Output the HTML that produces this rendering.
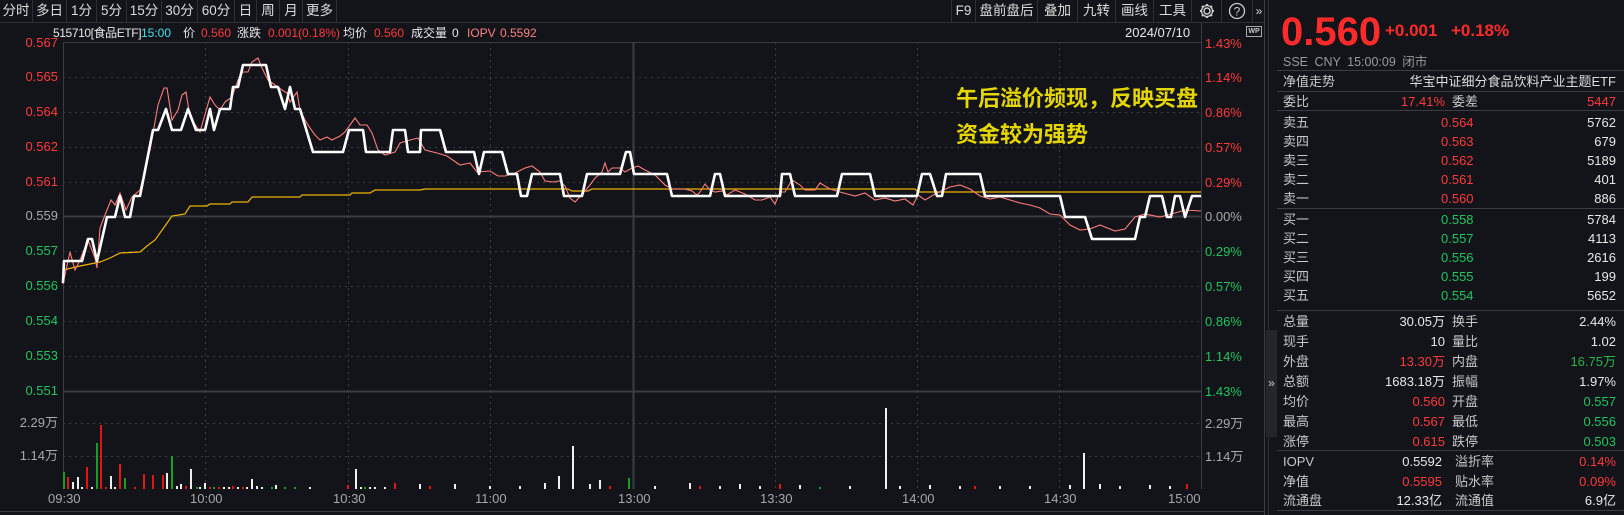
<!DOCTYPE html>
<html><head><meta charset="utf-8"><style>
*{margin:0;padding:0;box-sizing:border-box}
body{width:1624px;height:515px;background:#12141a;overflow:hidden;position:relative;font-family:"Liberation Sans","Noto Sans CJK SC",sans-serif;font-size:13px;color:#d8d8d8}
.a{position:absolute;white-space:nowrap;line-height:1}
.tb{position:absolute;top:0;height:22px;border-right:1px solid #2c2f35;color:#dcdcdc;font-size:13.5px;line-height:22px;text-align:center}
.r{color:#ff3a3a}.g{color:#22c55e}.w{color:#e8e8e8}.gr{color:#a8a8a8}.c{color:#3fe0e8}
.lab{position:absolute;left:1283px;color:#c8c8c8;line-height:1}
.v1{position:absolute;right:179px;text-align:right;line-height:1}
.v2{position:absolute;right:8px;text-align:right;line-height:1}
.l2{position:absolute;left:1452px;color:#c8c8c8;line-height:1}
.hr{position:absolute;left:1277px;width:347px;height:1px;background:#3a3d43}
.info{font-size:12px;top:27px}
</style></head><body>
<div style="position:absolute;left:0;top:22px;width:1265px;height:1px;background:#2c2f35"></div>
<div class="tb" style="left:0;width:33px">分时</div>
<div class="tb" style="left:33px;width:34px">多日</div>
<div class="tb" style="left:67px;width:30px">1分</div>
<div class="tb" style="left:97px;width:30px">5分</div>
<div class="tb" style="left:127px;width:35px">15分</div>
<div class="tb" style="left:162px;width:36px">30分</div>
<div class="tb" style="left:198px;width:37px">60分</div>
<div class="tb" style="left:235px;width:22px">日</div>
<div class="tb" style="left:257px;width:23px">周</div>
<div class="tb" style="left:280px;width:23px">月</div>
<div class="tb" style="left:303px;width:34px">更多</div>
<div class="tb" style="left:951px;width:25px;border-left:1px solid #2c2f35">F9</div>
<div class="tb" style="left:976px;width:62px">盘前盘后</div>
<div class="tb" style="left:1038px;width:40px">叠加</div>
<div class="tb" style="left:1078px;width:38px">九转</div>
<div class="tb" style="left:1116px;width:38px">画线</div>
<div class="tb" style="left:1154px;width:38px">工具</div>
<div class="tb" style="left:1192px;width:30px"><svg width="18" height="18" viewBox="0 0 18 18" style="margin-top:2px"><circle cx="9" cy="9" r="3" fill="none" stroke="#ccc" stroke-width="1.5"/><path d="M9 2v2M9 14v2M2 9h2M14 9h2M4 4l1.5 1.5M12.5 12.5L14 14M4 14l1.5-1.5M12.5 5.5L14 4" stroke="#ccc" stroke-width="2"/><circle cx="9" cy="9" r="5.5" fill="none" stroke="#ccc" stroke-width="1.3"/></svg></div>
<div class="tb" style="left:1222px;width:31px"><svg width="18" height="18" viewBox="0 0 18 18" style="margin-top:2px"><circle cx="9" cy="9" r="7.5" fill="none" stroke="#ccc" stroke-width="1.3"/><text x="9" y="13.5" font-size="12" fill="#ccc" text-anchor="middle" font-family="Liberation Sans">?</text></svg></div>
<div class="tb" style="left:1253px;width:12px;border:none;font-size:12px">»</div>
<div class="a w info" style="left:53px;letter-spacing:-0.4px">515710[食品ETF]</div>
<div class="a c info" style="left:141px">15:00</div>
<div class="a w info" style="left:183px">价</div>
<div class="a r info" style="left:201px">0.560</div>
<div class="a w info" style="left:237px">涨跌</div>
<div class="a r info" style="left:268px">0.001(0.18%)</div>
<div class="a w info" style="left:343px">均价</div>
<div class="a r info" style="left:374px">0.560</div>
<div class="a w info" style="left:411px">成交量</div>
<div class="a w info" style="left:452px">0</div>
<div class="a info" style="left:467px;color:#ff8080">IOPV</div>
<div class="a info" style="left:500px;color:#ff8080">0.5592</div>
<div class="a w" style="left:1125px;top:26px">2024/07/10</div>
<div class="a" style="left:1246px;top:26px;width:16px;height:11px;border:1px solid #aaa;font-size:7px;color:#ccc;text-align:center;line-height:9px;font-weight:bold">WP</div>
<div class="a r" style="right:1566px;top:36px">0.567</div>
<div class="a r" style="right:1566px;top:70px">0.565</div>
<div class="a r" style="right:1566px;top:105px">0.564</div>
<div class="a r" style="right:1566px;top:140px">0.562</div>
<div class="a r" style="right:1566px;top:175px">0.561</div>
<div class="a gr" style="right:1566px;top:209px">0.559</div>
<div class="a g" style="right:1566px;top:244px">0.557</div>
<div class="a g" style="right:1566px;top:279px">0.556</div>
<div class="a g" style="right:1566px;top:314px">0.554</div>
<div class="a g" style="right:1566px;top:349px">0.553</div>
<div class="a g" style="right:1566px;top:384px">0.551</div>
<div class="a gr" style="right:1566px;top:416px">2.29万</div>
<div class="a gr" style="right:1566px;top:449px">1.14万</div>
<div class="a r" style="left:1205px;top:37px">1.43%</div>
<div class="a r" style="left:1205px;top:71px">1.14%</div>
<div class="a r" style="left:1205px;top:106px">0.86%</div>
<div class="a r" style="left:1205px;top:141px">0.57%</div>
<div class="a r" style="left:1205px;top:176px">0.29%</div>
<div class="a gr" style="left:1205px;top:210px">0.00%</div>
<div class="a g" style="left:1205px;top:245px">0.29%</div>
<div class="a g" style="left:1205px;top:280px">0.57%</div>
<div class="a g" style="left:1205px;top:315px">0.86%</div>
<div class="a g" style="left:1205px;top:350px">1.14%</div>
<div class="a g" style="left:1205px;top:385px">1.43%</div>
<div class="a gr" style="left:1205px;top:417px">2.29万</div>
<div class="a gr" style="left:1205px;top:450px">1.14万</div>
<div class="a gr" style="left:48px;top:492px">09:30</div>
<div class="a gr" style="left:190px;top:492px">10:00</div>
<div class="a gr" style="left:333px;top:492px">10:30</div>
<div class="a gr" style="left:475px;top:492px">11:00</div>
<div class="a gr" style="left:618px;top:492px">13:00</div>
<div class="a gr" style="left:760px;top:492px">13:30</div>
<div class="a gr" style="left:902px;top:492px">14:00</div>
<div class="a gr" style="left:1044px;top:492px">14:30</div>
<div class="a gr" style="left:1168px;top:492px">15:00</div>
<svg class="a" style="left:0;top:0" width="1270" height="515">
<g stroke="#3a3d43" stroke-width="1" fill="none">
<line x1="63.5" y1="42" x2="63.5" y2="489"/><line x1="1201.5" y1="23" x2="1201.5" y2="489"/>
<line x1="1264.5" y1="0" x2="1264.5" y2="515"/>
<line x1="63" y1="42.5" x2="1201" y2="42.5"/>
<line x1="63" y1="216.5" x2="1201" y2="216.5" stroke-width="2"/>
<line x1="63" y1="391.5" x2="1201" y2="391.5" stroke-width="2"/>
<line x1="633.5" y1="42" x2="633.5" y2="489" stroke-width="2"/>
<line x1="0" y1="511.5" x2="1264" y2="511.5"/>
</g>
<g stroke="#3a3d43" stroke-dasharray="2,4" fill="none">
<line x1="63" y1="77.5" x2="1201" y2="77.5"/><line x1="63" y1="112.5" x2="1201" y2="112.5"/><line x1="63" y1="147.5" x2="1201" y2="147.5"/><line x1="63" y1="182.5" x2="1201" y2="182.5"/><line x1="63" y1="251.5" x2="1201" y2="251.5"/><line x1="63" y1="286.5" x2="1201" y2="286.5"/><line x1="63" y1="321.5" x2="1201" y2="321.5"/><line x1="63" y1="356.5" x2="1201" y2="356.5"/>
<line x1="63" y1="423.5" x2="1201" y2="423.5"/><line x1="63" y1="456.5" x2="1201" y2="456.5"/>
<line x1="205.5" y1="42" x2="205.5" y2="489"/><line x1="348.5" y1="42" x2="348.5" y2="489"/><line x1="490.5" y1="42" x2="490.5" y2="489"/><line x1="775.5" y1="42" x2="775.5" y2="489"/><line x1="917.5" y1="42" x2="917.5" y2="489"/><line x1="1059.5" y1="42" x2="1059.5" y2="489"/>
</g>
<g stroke-width="2">
<g stroke="#e01515"><line x1="68" y1="489" x2="68" y2="477"/><line x1="87" y1="489" x2="87" y2="467"/><line x1="101" y1="489" x2="101" y2="425"/><line x1="106" y1="489" x2="106" y2="487"/><line x1="120" y1="489" x2="120" y2="464"/><line x1="135" y1="489" x2="135" y2="487"/><line x1="144" y1="489" x2="144" y2="474"/><line x1="153" y1="489" x2="153" y2="475"/><line x1="163" y1="489" x2="163" y2="475"/><line x1="186" y1="489" x2="186" y2="486"/><line x1="210" y1="489" x2="210" y2="487"/><line x1="219" y1="489" x2="219" y2="487"/><line x1="233" y1="489" x2="233" y2="486"/><line x1="243" y1="489" x2="243" y2="487"/><line x1="348" y1="489" x2="348" y2="485"/><line x1="395" y1="489" x2="395" y2="483"/><line x1="430" y1="489" x2="430" y2="486"/><line x1="610" y1="489" x2="610" y2="486"/><line x1="700" y1="489" x2="700" y2="486"/><line x1="780" y1="489" x2="780" y2="484"/><line x1="975" y1="489" x2="975" y2="486"/><line x1="1187" y1="489" x2="1187" y2="484"/></g>
<g stroke="#14a028"><line x1="64" y1="489" x2="64" y2="472"/><line x1="97" y1="489" x2="97" y2="443"/><line x1="125" y1="489" x2="125" y2="478"/><line x1="172" y1="489" x2="172" y2="456"/><line x1="197" y1="489" x2="197" y2="487"/><line x1="214" y1="489" x2="214" y2="487"/><line x1="272" y1="489" x2="272" y2="487"/><line x1="285" y1="489" x2="285" y2="487"/><line x1="295" y1="489" x2="295" y2="487"/><line x1="365" y1="489" x2="365" y2="487"/><line x1="629" y1="489" x2="629" y2="478"/><line x1="820" y1="489" x2="820" y2="487"/></g>
<g stroke="#eeeeee"><line x1="73" y1="489" x2="73" y2="482"/><line x1="78" y1="489" x2="78" y2="477"/><line x1="82" y1="489" x2="82" y2="487"/><line x1="92" y1="489" x2="92" y2="487"/><line x1="111" y1="489" x2="111" y2="476"/><line x1="115" y1="489" x2="115" y2="487"/><line x1="167" y1="489" x2="167" y2="473"/><line x1="177" y1="489" x2="177" y2="486"/><line x1="181" y1="489" x2="181" y2="484"/><line x1="191" y1="489" x2="191" y2="469"/><line x1="200" y1="489" x2="200" y2="487"/><line x1="205" y1="489" x2="205" y2="483"/><line x1="224" y1="489" x2="224" y2="487"/><line x1="229" y1="489" x2="229" y2="487"/><line x1="238" y1="489" x2="238" y2="487"/><line x1="247" y1="489" x2="247" y2="487"/><line x1="252" y1="489" x2="252" y2="479"/><line x1="257" y1="489" x2="257" y2="486"/><line x1="262" y1="489" x2="262" y2="487"/><line x1="276" y1="489" x2="276" y2="485"/><line x1="310" y1="489" x2="310" y2="487"/><line x1="356" y1="489" x2="356" y2="469"/><line x1="361" y1="489" x2="361" y2="487"/><line x1="370" y1="489" x2="370" y2="487"/><line x1="375" y1="489" x2="375" y2="487"/><line x1="385" y1="489" x2="385" y2="487"/><line x1="420" y1="489" x2="420" y2="484"/><line x1="455" y1="489" x2="455" y2="484"/><line x1="490" y1="489" x2="490" y2="486"/><line x1="520" y1="489" x2="520" y2="486"/><line x1="545" y1="489" x2="545" y2="483"/><line x1="559" y1="489" x2="559" y2="476"/><line x1="573" y1="489" x2="573" y2="446"/><line x1="590" y1="489" x2="590" y2="484"/><line x1="600" y1="489" x2="600" y2="480"/><line x1="655" y1="489" x2="655" y2="486"/><line x1="690" y1="489" x2="690" y2="483"/><line x1="720" y1="489" x2="720" y2="486"/><line x1="740" y1="489" x2="740" y2="484"/><line x1="760" y1="489" x2="760" y2="486"/><line x1="800" y1="489" x2="800" y2="485"/><line x1="850" y1="489" x2="850" y2="486"/><line x1="886" y1="489" x2="886" y2="408"/><line x1="900" y1="489" x2="900" y2="486"/><line x1="930" y1="489" x2="930" y2="485"/><line x1="960" y1="489" x2="960" y2="486"/><line x1="1000" y1="489" x2="1000" y2="486"/><line x1="1030" y1="489" x2="1030" y2="486"/><line x1="1070" y1="489" x2="1070" y2="485"/><line x1="1084" y1="489" x2="1084" y2="453"/><line x1="1100" y1="489" x2="1100" y2="484"/><line x1="1120" y1="489" x2="1120" y2="486"/><line x1="1150" y1="489" x2="1150" y2="485"/><line x1="1170" y1="489" x2="1170" y2="486"/></g>
</g>
<polyline fill="none" stroke="#f0b400" stroke-width="1.2" points="63,270 80,266 100,262 110,258 120,253 140,252 147,246 155,240 165,226 172,216 185,214 190,206 207,206 210,204 230,204 232,202 248,202 252,197 300,197 302,195 350,195 352,193 370,193 375,190 420,190 425,189 568,189 572,191 588,191 592,189 915,189 918,192 1201,192"/>
<polyline fill="none" stroke="#ff7b7b" stroke-width="1.1" points="63,284 70,252 75,270 80,260 88,240 95,258 97,268 100,228 105,215 111,200 115,205 120,193 126,210 132,197 140,190 150,150 158,105 164,88 167,88 172,120 178,110 182,95 186,92 190,117 200,132 210,97 215,105 220,110 225,102 232,97 238,80 243,72 248,72 252,62 258,58 262,68 268,80 275,85 282,90 287,93 290,102 297,92 300,110 305,120 310,128 315,135 320,140 327,137 332,140 340,136 345,132 350,125 355,118 360,125 367,125 372,133 378,150 385,155 395,152 400,143 410,140 418,138 425,150 437,153 447,156 460,165 470,163 477,172 490,171 498,176 505,176 515,173 525,168 532,166 540,172 545,181 553,182 560,181 565,186 570,198 575,202 585,191 590,185 595,178 602,172 605,163 608,172 612,168 620,168 625,172 632,168 638,166 645,170 655,175 665,185 672,189 685,189 692,191 697,195 700,192 705,184 710,190 715,192 722,191 727,195 735,190 745,194 755,200 762,200 770,197 775,204 780,192 785,192 792,180 800,185 805,190 815,190 820,183 830,189 840,192 855,196 865,193 875,200 885,198 895,201 905,199 913,205 918,195 925,200 935,194 950,187 960,185 970,189 980,196 990,199 1000,197 1010,200 1020,203 1030,205 1040,208 1050,214 1060,215 1070,225 1080,230 1090,229 1100,225 1115,231 1125,229 1135,217 1145,214 1160,217 1175,213 1185,210 1201,211"/>
<polyline fill="none" stroke="#ffffff" stroke-width="2.6" stroke-linejoin="round" points="63,283 64,261 82,261 88,239 92,239 97,261 107,217 115,217 120,196 125,217 130,217 134,196 140,196 153,130 158,130 166,109 172,130 181,130 188,109 196,130 205,130 210,109 214,130 220,109 230,109 233,87 238,87 243,65 266,65 271,87 278,87 285,109 290,87 295,109 300,109 313,152 343,152 349,130 363,130 366,152 390,152 393,130 405,130 408,152 420,152 421,130 440,130 446,152 474,152 479,174 484,152 502,152 508,174 517,174 521,196 527,196 532,174 560,174 564,196 582,196 587,174 620,174 626,152 630,152 634,174 667,174 672,196 710,196 715,174 720,174 725,196 780,196 782,174 790,174 795,196 837,196 842,174 870,174 875,196 917,196 922,174 930,174 937,196 942,196 946,174 980,174 985,196 1060,196 1065,217 1085,217 1092,239 1135,239 1140,217 1145,217 1150,196 1162,196 1167,217 1171,217 1175,196 1180,196 1185,217 1192,196 1201,196"/>
</svg>
<div class="a" style="left:956px;top:88px;color:#e6d600;font-size:22px;font-weight:bold;line-height:1">午后溢价频现，反映买盘</div>
<div class="a" style="left:956px;top:124px;color:#e6d600;font-size:22px;font-weight:bold;line-height:1">资金较为强势</div>
<div style="position:absolute;left:1268px;top:0;width:1px;height:515px;background:#2c2f35"></div>
<div style="position:absolute;left:1266px;top:330px;width:11px;height:107px;background:#24262b;color:#ccc;font-size:12px;text-align:center;line-height:107px">»</div>
<div class="a" style="left:1281px;top:12px;font-size:40px;font-weight:bold;color:#ff2a2a">0.560</div>
<div class="a" style="left:1385px;top:22px;font-size:17px;font-weight:bold;color:#ff2a2a">+0.001</div>
<div class="a" style="left:1451px;top:22px;font-size:17px;font-weight:bold;color:#ff2a2a">+0.18%</div>
<div class="a" style="left:1283px;top:56px;font-size:12.5px;color:#9a9a9a;word-spacing:3px">SSE CNY 15:00:09 闭市</div>
<div class="hr" style="top:70px"></div>
<div class="lab" style="top:75px">净值走势</div>
<div class="v2 w" style="top:75px;color:#ddd">华宝中证细分食品饮料产业主题ETF</div>
<div class="hr" style="top:91px"></div>
<div class="lab" style="top:95px">委比</div><div class="v1 r" style="top:95px">17.41%</div><div class="l2" style="top:95px">委差</div><div class="v2 r" style="top:95px">5447</div>
<div class="hr" style="top:110px"></div>
<div class="lab" style="top:116px">卖五</div><div class="a r" style="left:1441px;top:116px">0.564</div><div class="v2 w" style="top:116px">5762</div>
<div class="lab" style="top:135px">卖四</div><div class="a r" style="left:1441px;top:135px">0.563</div><div class="v2 w" style="top:135px">679</div>
<div class="lab" style="top:154px">卖三</div><div class="a r" style="left:1441px;top:154px">0.562</div><div class="v2 w" style="top:154px">5189</div>
<div class="lab" style="top:173px">卖二</div><div class="a r" style="left:1441px;top:173px">0.561</div><div class="v2 w" style="top:173px">401</div>
<div class="lab" style="top:192px">卖一</div><div class="a r" style="left:1441px;top:192px">0.560</div><div class="v2 w" style="top:192px">886</div>
<div class="hr" style="top:208px"></div>
<div class="lab" style="top:213px">买一</div><div class="a g" style="left:1441px;top:213px">0.558</div><div class="v2 w" style="top:213px">5784</div>
<div class="lab" style="top:232px">买二</div><div class="a g" style="left:1441px;top:232px">0.557</div><div class="v2 w" style="top:232px">4113</div>
<div class="lab" style="top:251px">买三</div><div class="a g" style="left:1441px;top:251px">0.556</div><div class="v2 w" style="top:251px">2616</div>
<div class="lab" style="top:270px">买四</div><div class="a g" style="left:1441px;top:270px">0.555</div><div class="v2 w" style="top:270px">199</div>
<div class="lab" style="top:289px">买五</div><div class="a g" style="left:1441px;top:289px">0.554</div><div class="v2 w" style="top:289px">5652</div>
<div class="hr" style="top:310px"></div>
<div class="lab" style="top:315px">总量</div><div class="v1 w" style="top:315px">30.05万</div><div class="l2" style="top:315px">换手</div><div class="v2 w" style="top:315px">2.44%</div>
<div class="lab" style="top:335px">现手</div><div class="v1 w" style="top:335px">10</div><div class="l2" style="top:335px">量比</div><div class="v2 w" style="top:335px">1.02</div>
<div class="lab" style="top:355px">外盘</div><div class="v1 r" style="top:355px">13.30万</div><div class="l2" style="top:355px">内盘</div><div class="v2" style="top:355px;color:#2bb44a">16.75万</div>
<div class="lab" style="top:375px">总额</div><div class="v1 w" style="top:375px">1683.18万</div><div class="l2" style="top:375px">振幅</div><div class="v2 w" style="top:375px">1.97%</div>
<div class="lab" style="top:395px">均价</div><div class="v1 r" style="top:395px">0.560</div><div class="l2" style="top:395px">开盘</div><div class="v2 g" style="top:395px">0.557</div>
<div class="lab" style="top:415px">最高</div><div class="v1 r" style="top:415px">0.567</div><div class="l2" style="top:415px">最低</div><div class="v2 g" style="top:415px">0.556</div>
<div class="lab" style="top:435px">涨停</div><div class="v1 r" style="top:435px">0.615</div><div class="l2" style="top:435px">跌停</div><div class="v2 g" style="top:435px">0.503</div>
<div class="hr" style="top:450px"></div>
<div class="lab" style="top:455px">IOPV</div><div class="v1 w" style="right:182px;top:455px">0.5592</div><div class="l2" style="left:1455px;top:455px">溢折率</div><div class="v2 r" style="top:455px">0.14%</div>
<div class="lab" style="top:475px">净值</div><div class="v1 r" style="right:182px;top:475px">0.5595</div><div class="l2" style="left:1455px;top:475px">贴水率</div><div class="v2 r" style="top:475px">0.09%</div>
<div class="lab" style="top:494px">流通盘</div><div class="v1 w" style="right:182px;top:494px">12.33亿</div><div class="l2" style="left:1455px;top:494px">流通值</div><div class="v2 w" style="top:494px">6.9亿</div>
<div class="hr" style="top:510px"></div>
</body></html>
